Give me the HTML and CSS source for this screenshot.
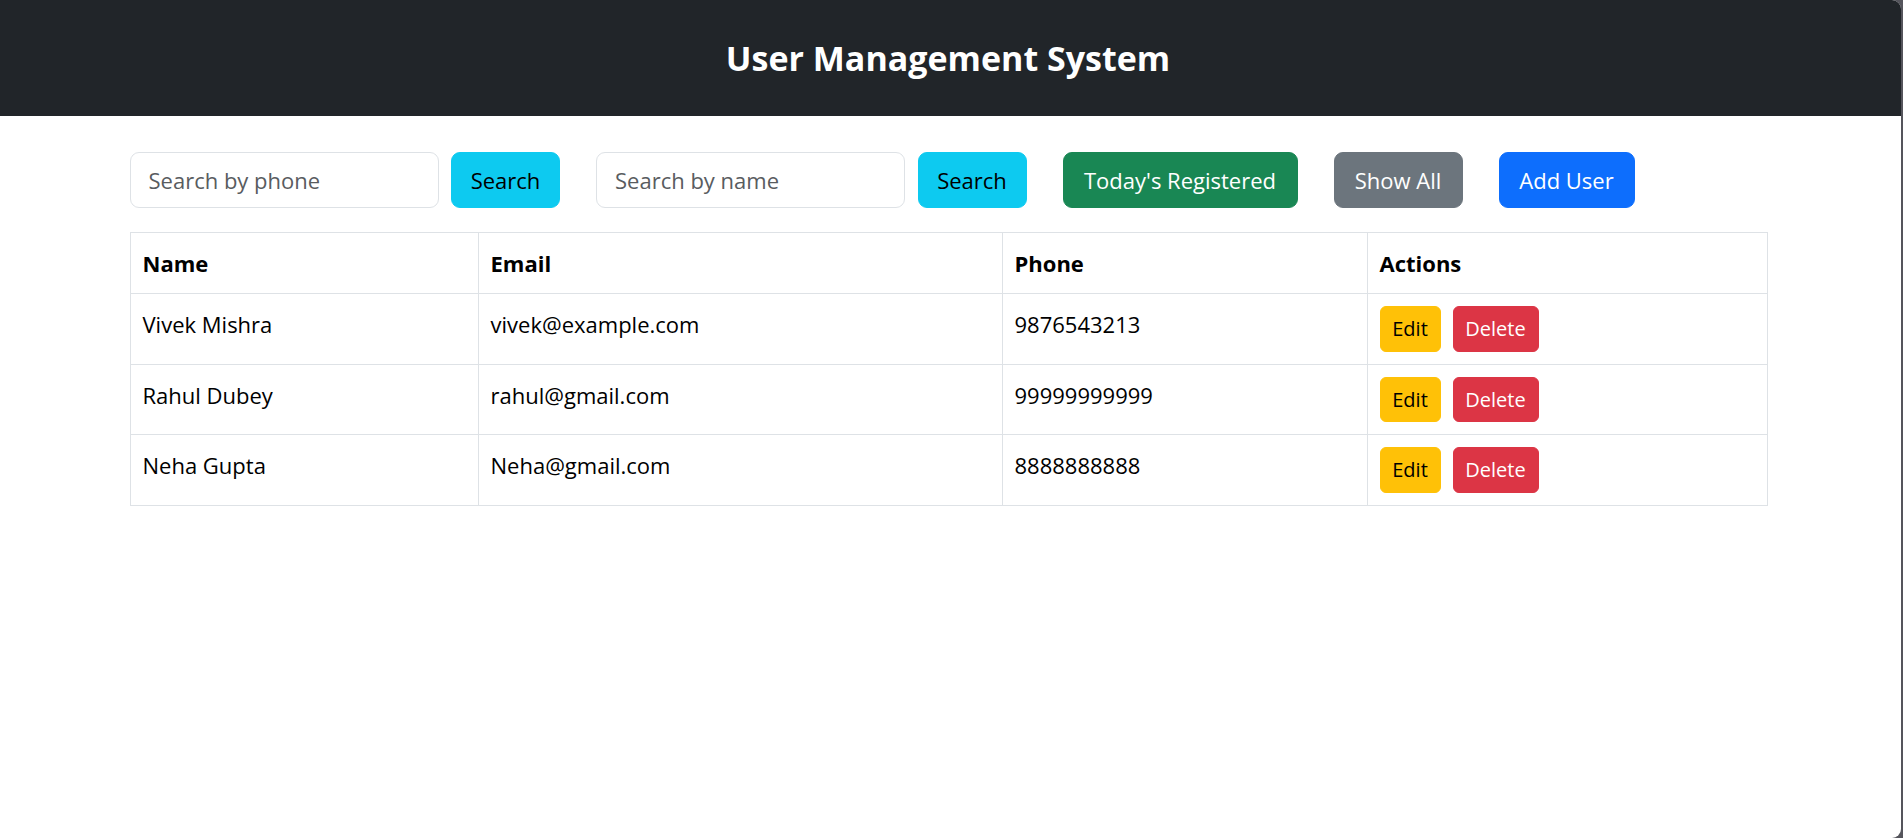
FILE: index.html
```html
<!DOCTYPE html>
<html lang="en">
<head>
<meta charset="utf-8">
<title>User Management System</title>
<link rel="stylesheet" href="styles.css">
</head>
<body>
<div class="window">
  <header class="topbar">
    <h1 class="title">User Management System</h1>
  </header>
  <main class="content">
    <div class="toolbar">
      <div class="search-group">
        <input class="field" type="text" placeholder="Search by phone">
        <button class="btn btn-info btn-search">Search</button>
      </div>
      <div class="search-group">
        <input class="field" type="text" placeholder="Search by name">
        <button class="btn btn-info btn-search">Search</button>
      </div>
      <button class="btn btn-success btn-today">Today's Registered</button>
      <button class="btn btn-secondary btn-all">Show All</button>
      <button class="btn btn-primary btn-add">Add User</button>
    </div>
    <table class="users">
      <colgroup>
        <col class="col-name">
        <col class="col-email">
        <col class="col-phone">
        <col class="col-actions">
      </colgroup>
      <thead>
        <tr><th>Name</th><th>Email</th><th>Phone</th><th>Actions</th></tr>
      </thead>
      <tbody>
        <tr>
          <td>Vivek Mishra</td><td>vivek@example.com</td><td>9876543213</td>
          <td><div class="actions"><button class="btn-sm btn-warning btn-edit">Edit</button><button class="btn-sm btn-danger btn-delete">Delete</button></div></td>
        </tr>
        <tr>
          <td>Rahul Dubey</td><td>rahul@gmail.com</td><td>99999999999</td>
          <td><div class="actions"><button class="btn-sm btn-warning btn-edit">Edit</button><button class="btn-sm btn-danger btn-delete">Delete</button></div></td>
        </tr>
        <tr>
          <td>Neha Gupta</td><td>Neha@gmail.com</td><td>8888888888</td>
          <td><div class="actions"><button class="btn-sm btn-warning btn-edit">Edit</button><button class="btn-sm btn-danger btn-delete">Delete</button></div></td>
        </tr>
      </tbody>
    </table>
  </main>
</div>
</body>
</html>
```

FILE: styles.css
```css
html {
  background: #55555c;
}
body {
  margin: 0;
  font-family: "Open Sans", "Noto Sans", sans-serif;
  color: #212529;
}
.window {
  width: 1901px;
  height: 838px;
  background: #ffffff;
  border-radius: 0 9px 9px 0;
  overflow: hidden;
}
.topbar {
  background: #212529;
  padding: 36px 5px 35px 0;
  text-align: center;
}
.title {
  margin: 0;
  color: #ffffff;
  font-size: 34px;
  line-height: 45px;
  font-weight: 700;
}
.content {
  width: 1637px;
  margin: 36px 0 0 129.5px;
}
.toolbar {
  display: flex;
  align-items: center;
  gap: 36px;
  margin-bottom: 24px;
}
.search-group {
  display: flex;
  gap: 12.5px;
}
.field {
  box-sizing: border-box;
  width: 309px;
  height: 56px;
  padding: 9px 18px;
  border: 1px solid #dee2e6;
  border-radius: 9px;
  font-family: inherit;
  font-size: 22px;
  line-height: 36px;
  color: #212529;
  background: #fff;
}
.field::placeholder {
  color: #595c5f;
}
.btn {
  box-sizing: border-box;
  height: 56px;
  padding: 0;
  border: 1px solid transparent;
  border-radius: 9px;
  font-family: inherit;
  font-size: 22px;
  line-height: 36px;
  cursor: pointer;
}
.btn-search { width: 109px; }
.btn-today { width: 235px; }
.btn-all { width: 129px; }
.btn-add { width: 136px; }
.btn-info { background: #0dcaf0; border-color: #0dcaf0; color: #000; }
.btn-success { background: #198754; border-color: #198754; color: #fff; }
.btn-secondary { background: #6c757d; border-color: #6c757d; color: #fff; }
.btn-primary { background: #0d6efd; border-color: #0d6efd; color: #fff; }

.users {
  width: 1637px;
  border-collapse: collapse;
  table-layout: fixed;
  color: #000;
  font-size: 22px;
  line-height: 36px;
}
.col-name { width: 348px; }
.col-email { width: 524px; }
.col-phone { width: 365px; }
.col-actions { width: 400px; }
.users th,
.users td {
  border: 1px solid #dee2e6;
  padding: 12px;
  text-align: left;
  vertical-align: top;
}
.users th {
  font-weight: 700;
}
.actions {
  display: flex;
  gap: 12px;
}
.btn-sm {
  box-sizing: border-box;
  height: 45.5px;
  padding: 0;
  border: 1px solid transparent;
  border-radius: 6px;
  font-family: inherit;
  font-size: 20px;
  line-height: 31px;
  cursor: pointer;
}
.btn-edit { width: 61px; }
.btn-delete { width: 86px; }
.btn-warning { background: #ffc107; border-color: #ffc107; color: #000; }
.btn-danger { background: #dc3545; border-color: #dc3545; color: #fff; }
```
